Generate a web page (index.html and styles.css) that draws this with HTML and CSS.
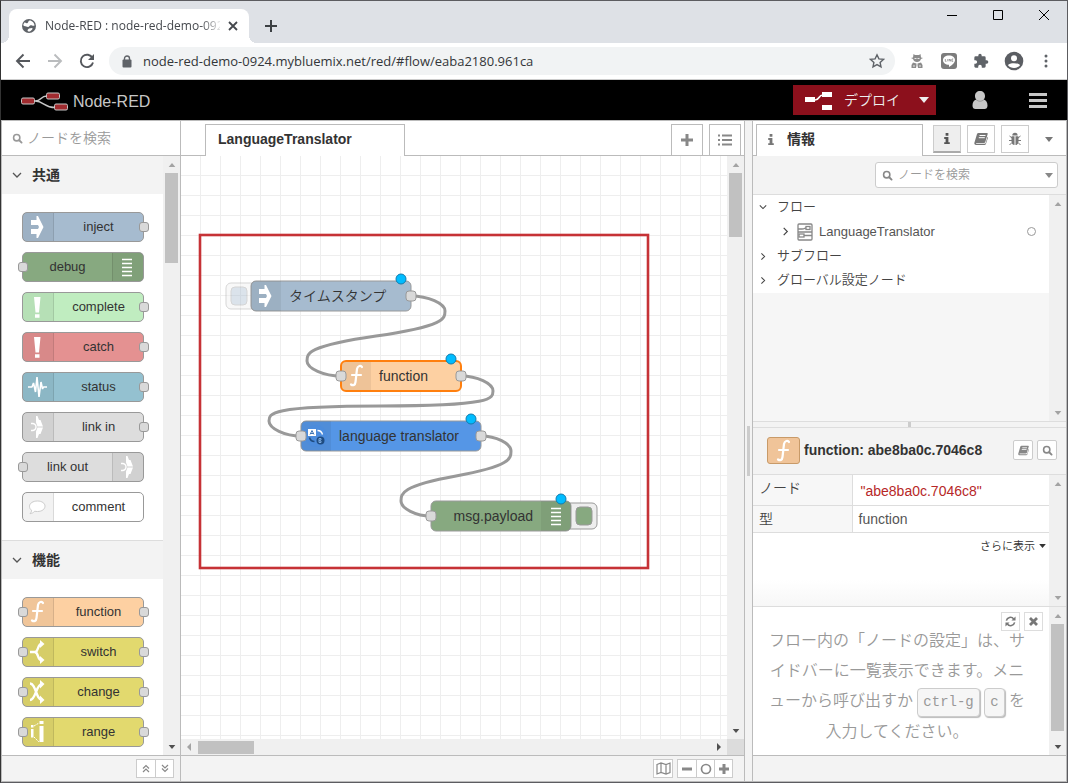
FILE: index.html
```
<!DOCTYPE html>
<html lang="ja">
<head>
<meta charset="utf-8">
<title>Node-RED : node-red-demo-0924</title>
<link rel="stylesheet" href="styles.css">
</head>
<body>
<svg class="defs" aria-hidden="true">
  <symbol id="i-inject" viewBox="0 0 30 30"><path fill="#fff" d="M9 8h5.500V4H16l5.500 11L16 26h-1.500v-4H9v-5h7l1-2-1-2H9z"/></symbol>
  <symbol id="i-debug" viewBox="0 0 30 30"><path stroke="#fff" stroke-width="1.400" d="M10 7.500h10M10 11.500h10M10 15.500h10M10 19.500h10M10 23.500h10"/></symbol>
  <symbol id="i-alert" viewBox="0 0 30 30"><path fill="#fff" d="M12 5h6.500l-1.500 15.500h-3.500zM13 22.300h4.500v3.500H13z"/></symbol>
  <symbol id="i-status" viewBox="0 0 30 30"><path fill="none" stroke="#fff" stroke-width="1.600" stroke-linejoin="bevel" d="M6 15h4l1.500-4 2 9L15 5l2 20 2-15 1.500 7 1-2h3.500"/></symbol>
  <symbol id="i-link" viewBox="0 0 30 30"><path fill="#fff" d="M14 4h1.500l1.500 4h1.500l2.500 6.500h-5.500L14 10.500zM14 26h1.500l1.500-4h1.500l2.500-6.500h-5.500L14 19.500z"/><path fill="none" stroke="#fff" stroke-width="1.400" d="M9 11.500h1.500a3.500 3.500 0 0 1 0 7H9"/></symbol>
  <symbol id="i-comment" viewBox="0 0 30 30"><path fill="#fff" stroke="#ccc" d="M15.500 9c4.500 0 7.500 2.300 7.500 5.200s-3 5.300-7.500 5.300c-1 0-2-.1-2.800-.3-1.200 1.500-2.700 2.200-4.700 2.500 1-1 1.600-2 1.600-3.500C8 17.200 7.500 16 7.500 14.200 7.500 11.300 11 9 15.500 9z"/></symbol>
  <symbol id="i-function" viewBox="0 0 30 30"><path fill="none" stroke="#fff" stroke-width="2.200" stroke-linecap="round" d="M21 6c-1-2-4.500-1.500-5 2l-1.500 13c-.3 3-2.500 4-4.500 2.500M11 14h9"/></symbol>
  <symbol id="i-switch" viewBox="0 0 30 30"><path fill="none" stroke="#fff" stroke-width="2.400" d="M8 15h5.500c3-1 2-8 6.500-8.500M13 15c4 1 2 8 7 8.500"/><path fill="#fff" d="M18 3l4.500 4-4.500 4zM18 19l4.500 4-4.500 4z"/></symbol>
  <symbol id="i-change" viewBox="0 0 30 30"><path fill="none" stroke="#fff" stroke-width="2.300" d="M8 6.500c6 0 6 16.500 12 16.500M8 23c6 0 6-16 12-16"/><path fill="#fff" d="M18 3l4.500 4-4.500 4.500zM18 18.500l4.500 4.500-4.500 4z"/></symbol>
  <symbol id="i-range" viewBox="0 0 30 30"><path fill="#fff" d="M9 8h2.500v2.500H9zM9 12h2.500v8.500H9zM17.500 4h4v3h-4zM17.500 9h4v16h-4z"/><path stroke="#fff" stroke-dasharray="2 1" d="M12 9l5-3M12 20l5 5"/></symbol>
  <symbol id="i-book" viewBox="0 0 14 14"><path fill="currentColor" d="M4.500 1H13c.7 0 .9.500.7 1l-2.400 8c-.2.600-.7.900-1.300.9H2.400c-.6 0-.6.900 0 .9H11c.3 0 .5-.2.600-.5l2-6.500c.5.300.5.800.3 1.300l-2 6c-.2.600-.8.900-1.400.9H2C.8 13 0 11.800.4 10.800L3 2c.2-.6.800-1 1.500-1z"/><path stroke="#fff" d="M5.500 3.500h6M4.800 5.700h6"/></symbol>
  <symbol id="i-search" viewBox="0 0 14 14"><circle cx="6" cy="6" r="4" fill="none" stroke="currentColor" stroke-width="2"/><path stroke="currentColor" stroke-width="2.400" stroke-linecap="round" d="M9.200 9.200l3 3"/></symbol>
  <symbol id="i-info" viewBox="0 0 8 14"><path fill="currentColor" d="M2.500 1h3v3h-3zM1 5.500h4.500V11H7v2H1v-2h1.500V7.500H1z"/></symbol>
  <symbol id="i-right" viewBox="0 0 10 10"><path fill="none" stroke="currentColor" stroke-width="1.300" d="M3 1L7 5 3 9"/></symbol>
  <symbol id="i-down" viewBox="0 0 10 10"><path fill="none" stroke="currentColor" stroke-width="1.300" d="M1 3l4 4 4-4"/></symbol>
  <symbol id="i-caret" viewBox="0 0 10 6"><path fill="currentColor" d="M0 0h10L5 6z"/></symbol>
  <symbol id="i-caretup" viewBox="0 0 10 6"><path fill="currentColor" d="M0 6h10L5 0z"/></symbol>
</svg>

<div class="window">
  <div class="tabstrip">
    <div class="tab">
      <svg width="16" height="16" viewBox="0 0 16 16"><circle cx="8" cy="8" r="7" fill="#5f6368"/><path fill="#fff" d="M8.500 2.500c2.500 0 5 2.500 5 5-1.500 1-2.500-.5-4-.3C8 7.500 8.500 9 7 9 5.500 9 5 8 3 8L2.200 7c.3-1 .8-2 1.600-2.800C5 5 5.500 5.500 6.500 5c1-.6.500-1.800 2-2.500zM8 10.500l3-.5c.8.300.5 1.200 0 1.700-.8.800-2 2-3.500 1.800-.7-.3-1.200-1-.8-1.800z"/></svg>
      <span class="tab-title">Node-RED : node-red-demo-0924</span>
      <button class="plain" aria-label="Close tab"><svg width="10" height="10" viewBox="0 0 10 10"><path stroke="#45484d" stroke-width="1.800" d="M1 1l8 8M9 1L1 9"/></svg></button>
    </div>
    <button class="plain newtab" aria-label="New tab"><svg width="12" height="12" viewBox="0 0 12 12"><path stroke="#3c4043" stroke-width="2" d="M6 0v12M0 6h12"/></svg></button>
    <div class="wincontrols">
      <button class="plain" aria-label="Minimize"><svg width="12" height="12" viewBox="0 0 12 12"><path stroke="#000" d="M1 6.500h10"/></svg></button>
      <button class="plain" aria-label="Maximize"><svg width="12" height="12" viewBox="0 0 12 12"><path fill="none" stroke="#000" d="M1.500 1.500h9v9h-9z"/></svg></button>
      <button class="plain" aria-label="Close"><svg width="12" height="12" viewBox="0 0 12 12"><path stroke="#000" d="M1 1l10 10M11 1L1 11"/></svg></button>
    </div>
  </div>

  <div class="toolbar">
    <div class="nav">
      <button class="plain" aria-label="Back"><svg width="16" height="16" viewBox="0 0 16 16"><path fill="none" stroke="#55585d" stroke-width="1.900" d="M15 8H2M8.500 1.500L2 8l6.500 6.500"/></svg></button>
      <button class="plain" aria-label="Forward"><svg width="16" height="16" viewBox="0 0 16 16"><path fill="none" stroke="#babcbe" stroke-width="1.900" d="M1 8h13M7.500 1.500L14 8l-6.500 6.500"/></svg></button>
      <button class="plain" aria-label="Reload"><svg width="16" height="16" viewBox="0 0 16 16"><path fill="none" stroke="#55585d" stroke-width="1.900" d="M13.500 5A6.200 6.200 0 1 0 14 9.500"/><path fill="#55585d" d="M15 1v6H9z"/></svg></button>
    </div>
    <div class="address">
      <svg width="10" height="13" viewBox="0 0 10 13"><path fill="none" stroke="#5f6368" stroke-width="1.400" d="M2.500 5V3.500a2.500 2.500 0 0 1 5 0V5"/><rect y="4.500" x=".5" width="9" height="8" rx="1" fill="#5f6368"/></svg>
      <input class="url" aria-label="Address" value="node-red-demo-0924.mybluemix.net/red/#flow/eaba2180.961ca">
      <button class="plain" aria-label="Bookmark"><svg width="16" height="16" viewBox="0 0 16 16"><path fill="none" stroke="#5f6368" stroke-width="1.400" d="M8 1.800l1.900 4.100 4.500.5-3.300 3 .9 4.400L8 11.600l-4 2.200.9-4.400-3.300-3 4.500-.5z"/></svg></button>
    </div>
    <div class="extensions">
      <button class="plain" aria-label="Extension"><svg width="16" height="16" viewBox="0 0 16 16"><path fill="#8b8b8b" d="M4.500 1L6 2h4l1.500-1 .5 3.500 2 .5-2 1C11.500 8 10 9 8 9S4.500 8 4 6L2 5l2-.5zM2.500 15v-3L4 9.500l3.500 1v2L7 15zM13.500 15v-3L12 9.500l-3.500 1v2L9 15z"/><path stroke="#fff" stroke-width=".8" d="M5.500 5.500h2M8.500 5.500h2M4 13h2M10 13h2"/></svg></button>
      <button class="plain" aria-label="LINE"><svg width="18" height="18" viewBox="0 0 18 18"><rect x="1" y="1" width="16" height="16" rx="3" fill="#7c7c7c"/><path fill="#fff" d="M9 3.500c3.500 0 6 2 6 4.700 0 2-2 4.300-6 6.800v-2.200c-3.500 0-6-2-6-4.600s2.500-4.700 6-4.700z"/><path fill="none" stroke="#888" stroke-width=".8" d="M5.300 7v2.300h1.200M7.800 7v2.300M9.200 9.300V7l1.600 2.300V7M13.200 7h-1.200v2.300h1.200"/></svg></button>
      <button class="plain" aria-label="Extensions"><svg width="16" height="16" viewBox="0 0 24 24"><path fill="#5f6368" d="M20.500 11H19V7a2 2 0 0 0-2-2h-4V3.500a2.500 2.500 0 0 0-5 0V5H4a2 2 0 0 0-2 2v3.800h1.500a2.700 2.700 0 0 1 0 5.400H2V20c0 1.100.9 2 2 2h3.800v-1.500a2.700 2.700 0 0 1 5.400 0V22H17a2 2 0 0 0 2-2v-4h1.500a2.500 2.500 0 0 0 0-5z"/></svg></button>
      <button class="plain" aria-label="Profile"><svg width="20" height="20" viewBox="0 0 20 20"><circle cx="10" cy="10" r="9.300" fill="#5b5e63"/><circle cx="10" cy="7.300" r="3" fill="#fff"/><path fill="#fff" d="M4 14.200c1-2.600 11-2.600 12 0-2.600 3.600-9.400 3.600-12 0z"/></svg></button>
      <button class="plain menu-dots" aria-label="Menu"><svg width="4" height="14" viewBox="0 0 4 14"><g fill="#5f6368"><circle cx="2" cy="2" r="1.500"/><circle cx="2" cy="7" r="1.500"/><circle cx="2" cy="12" r="1.500"/></g></svg></button>
    </div>
  </div>

  <header class="header">
    <svg width="50" height="20" viewBox="0 0 50 20"><path fill="none" stroke="#c7c7c7" stroke-width="1.500" d="M15 10c7 0 5-5 12-5M15 10c9 0 9 6.500 20 6.500"/><g fill="#a02b2f" stroke="#c7c7c7"><rect x="1.500" y="7" width="13" height="6" rx="1.500"/><rect x="26.500" y="2" width="13" height="6" rx="1.500"/><rect x="34.500" y="13" width="13" height="6" rx="1.500"/></g></svg>
    <span class="brand">Node-RED</span>
    <button class="deploy">
      <svg width="28" height="20" viewBox="0 0 28 20"><path fill="#fff" d="M0 7h10v5H0zM17 2h10v5H17zM17 15h10v5H17z"/><path fill="none" stroke="#fff" stroke-width="1.600" d="M10 10c5 0 3-5 8-5"/></svg>
      <span>デプロイ</span>
      <svg width="10" height="6"><use href="#i-caret"/></svg>
    </button>
    <button class="plain user" aria-label="User"><svg width="16" height="18" viewBox="0 0 16 18"><path fill="#c7c7c7" d="M.5 14.500C.5 11 2 9 4.200 8.500 3.500 7.600 3 6.500 3 5c0-3 2-5 5-5s5 2 5 5c0 1.500-.5 2.600-1.200 3.500C14 9 15.500 11 15.500 14.500c0 2.500-1.200 3.500-3 3.500h-9c-1.800 0-3-1-3-3.500z"/><path fill="none" stroke="#888" stroke-width=".7" d="M4 8.500c2.500 2.300 5.500 2.300 8 0"/></svg></button>
    <button class="plain" aria-label="Main menu"><svg width="18" height="15" viewBox="0 0 18 15"><path stroke="#c7c7c7" stroke-width="2.800" d="M0 1.500h18M0 7.500h18M0 13.500h18"/></svg></button>
  </header>

  <main class="editor">
    <section class="palette">
      <label class="palette-search"><svg width="11" height="11"><use href="#i-search"/></svg><input type="search" placeholder="ノードを検索" aria-label="ノードを検索"></label>
      <div class="scroller">
        <div class="scroll-content">
          <button class="category"><svg width="10" height="10"><use href="#i-down"/></svg>共通</button>
          <ul class="nodes">
            <li class="node out c-inject"><span class="icon"><svg><use href="#i-inject"/></svg></span><span class="label">inject</span></li>
            <li class="node in flip c-debug"><span class="icon"><svg><use href="#i-debug"/></svg></span><span class="label">debug</span></li>
            <li class="node out c-complete"><span class="icon"><svg><use href="#i-alert"/></svg></span><span class="label">complete</span></li>
            <li class="node out c-catch"><span class="icon"><svg><use href="#i-alert"/></svg></span><span class="label">catch</span></li>
            <li class="node out c-status"><span class="icon"><svg><use href="#i-status"/></svg></span><span class="label">status</span></li>
            <li class="node out c-link"><span class="icon"><svg><use href="#i-link"/></svg></span><span class="label">link in</span></li>
            <li class="node in flip c-link"><span class="icon"><svg><use href="#i-link"/></svg></span><span class="label">link out</span></li>
            <li class="node c-comment"><span class="icon"><svg><use href="#i-comment"/></svg></span><span class="label">comment</span></li>
          </ul>
          <button class="category next"><svg width="10" height="10"><use href="#i-down"/></svg>機能</button>
          <ul class="nodes">
            <li class="node in out c-function"><span class="icon"><svg><use href="#i-function"/></svg></span><span class="label">function</span></li>
            <li class="node in out c-logic"><span class="icon"><svg><use href="#i-switch"/></svg></span><span class="label">switch</span></li>
            <li class="node in out c-logic"><span class="icon"><svg><use href="#i-change"/></svg></span><span class="label">change</span></li>
            <li class="node in out c-logic"><span class="icon"><svg><use href="#i-range"/></svg></span><span class="label">range</span></li>
          </ul>
        </div>
        <div class="bar" aria-hidden="true"><svg class="arrow" width="8" height="4"><use href="#i-caretup"/></svg><i class="thumb t-palette"></i><svg class="arrow end on" width="8" height="4"><use href="#i-caret"/></svg></div>
      </div>
      <div class="footer">
        <div class="group"><button aria-label="Collapse all"><svg width="8" height="9" viewBox="0 0 8 9"><path fill="none" stroke="#888" stroke-width="1.200" d="M1 4.500l3-3 3 3M1 8l3-3 3 3"/></svg></button><button aria-label="Expand all"><svg width="8" height="9" viewBox="0 0 8 9"><path fill="none" stroke="#888" stroke-width="1.200" d="M1 1l3 3 3-3M1 4.500l3 3 3-3"/></svg></button></div>
      </div>
    </section>

    <section class="workspace">
      <div class="ws-tabs">
        <button class="ws-tab">LanguageTranslator</button>
        <span class="fill"></span>
        <button class="ws-btn" aria-label="Add flow"><svg width="12" height="12" viewBox="0 0 12 12"><path stroke="#888" stroke-width="3" d="M6 0v12M0 6h12"/></svg></button>
        <button class="ws-btn" aria-label="List flows"><svg width="16" height="12" viewBox="0 0 16 12"><path stroke="#888" stroke-width="2" d="M1 1.500h2M1 6h2M1 10.500h2M5 1.500h10M5 6h10M5 10.500h10"/></svg></button>
      </div>
      <div class="ws-body">
        <svg class="canvas">
          <defs><pattern id="grid" width="20" height="20" patternUnits="userSpaceOnUse" x="200" y="175"><path fill="#eee" d="M0 0h20v1H1v19H0z"/></pattern></defs>
          <g transform="translate(-181 -156)">
            <rect x="181" y="156" width="3000" height="3000" fill="url(#grid)"/>
            <rect x="200" y="235" width="448" height="333" fill="none" stroke="#c63236" stroke-width="2.600"/>
            <g class="wires">
              <path d="M411 296C428 296 445 303.500 445 311S445 326 376 336 307 353.500 307 361 324 376 341 376"/>
              <path d="M461 376C477 376 493 383.500 493 391S493 406 381 406 269 413.500 269 421 285 436 301 436"/>
              <path d="M481 436C496 436 511 443.500 511 451S511 466 456 476 401 493.500 401 501 416 516 431 516"/>
            </g>
            <g opacity=".4"><rect class="outline" x="226" y="283" width="32" height="26" rx="5" fill="#eee"/><rect class="outline" x="231" y="287" width="16" height="18" rx="4" fill="#a6bbcf"/></g>
            <rect class="outline" x="251" y="281" width="160" height="30" rx="5" fill="#a6bbcf"/>
            <path class="shade" d="M256 281h25v30h-25q-5 0-5-5v-20q0-5 5-5z"/>
            <use href="#i-inject" x="250" y="281" width="30" height="30"/>
            <text x="289" y="301">タイムスタンプ</text>
            <rect class="port" x="406" y="291" width="10" height="10" rx="3"/>
            <circle class="changed" cx="401" cy="279" r="5"/>

            <rect x="341" y="361" width="120" height="30" rx="5" fill="#fdd0a2" stroke="#ff7f0e" stroke-width="2"/>
            <path class="shade" d="M346 362h25v28h-25q-4 0-4-4v-20q0-4 4-4z"/>
            <use href="#i-function" x="341" y="361" width="30" height="30"/>
            <text x="379" y="381">function</text>
            <rect class="port" x="336" y="371" width="10" height="10" rx="3"/>
            <rect class="port" x="456" y="371" width="10" height="10" rx="3"/>
            <circle class="changed" cx="451" cy="359" r="5"/>

            <rect class="outline" x="301" y="421" width="180" height="30" rx="5" fill="#5596e6"/>
            <path class="shade" d="M306 421h25v30h-25q-5 0-5-5v-20q0-5 5-5z"/>
            <circle cx="316" cy="436" r="11" fill="#4c8cdc"/>
            <rect x="308" y="429" width="8" height="7" fill="#fff"/><path fill="none" stroke="#4176b5" d="M310 434.500l2-4 2 4M311 433.500h2"/>
            <circle cx="320.500" cy="440.500" r="4" fill="#1f4c80"/><path fill="none" stroke="#7ba9df" d="M319 438.500v4h2q1-2-2-2 3 0 2-2z"/>
            <path fill="none" stroke="#fff" stroke-width="1.300" d="M317.500 430.500q4 0 5 4"/><path fill="none" stroke="#1f4c80" stroke-width="1.500" d="M314.500 441.500q-4 0-5-4"/>
            <text x="339" y="441">language translator</text>
            <rect class="port" x="296" y="431" width="10" height="10" rx="3"/>
            <rect class="port" x="476" y="431" width="10" height="10" rx="3"/>
            <circle class="changed" cx="471" cy="419" r="5"/>

            <rect class="outline" x="565" y="503" width="32" height="26" rx="5" fill="#eee"/><rect class="outline" x="576" y="507" width="16" height="18" rx="4" fill="#87a980"/>
            <rect class="outline" x="431" y="501" width="140" height="30" rx="5" fill="#87a980"/>
            <path class="shade" d="M541 501h25q5 0 5 5v20q0 5-5 5h-25z"/>
            <use href="#i-debug" x="541" y="501" width="30" height="30"/>
            <text x="533" y="521" text-anchor="end">msg.payload</text>
            <rect class="port" x="426" y="511" width="10" height="10" rx="3"/>
            <circle class="changed" cx="561" cy="499" r="5"/>
          </g>
        </svg>
        <div class="bar" aria-hidden="true"><svg class="arrow" width="8" height="4"><use href="#i-caretup"/></svg><i class="thumb t-canvas"></i><svg class="arrow end on" width="8" height="4"><use href="#i-caret"/></svg></div>
        <div class="hbar" aria-hidden="true"><svg width="4" height="8" viewBox="0 0 4 8"><path fill="#a3a3a3" d="M4 0v8L0 4z"/></svg><i class="hthumb"></i><svg class="end" width="4" height="8" viewBox="0 0 4 8"><path fill="#505050" d="M0 0v8l4-4z"/></svg></div>
        <div class="corner"></div>
      </div>
      <div class="footer ws-footer">
        <div class="group"><button aria-label="Navigator"><svg width="15" height="13" viewBox="0 0 15 13"><path fill="none" stroke="#888" stroke-width="1.200" d="M1 2.500l4-1.500 5 1.500L14 1v9.500L10 12l-5-1.500L1 12zM5 1v9.500M10 2.500V12"/></svg></button></div>
        <div class="group"><button aria-label="Zoom out"><svg width="10" height="10" viewBox="0 0 10 10"><path stroke="#888" stroke-width="3" d="M0 5h10"/></svg></button><button aria-label="Reset zoom"><svg width="12" height="12" viewBox="0 0 12 12"><circle cx="6" cy="6" r="4.500" fill="none" stroke="#888" stroke-width="1.700"/></svg></button><button aria-label="Zoom in"><svg width="10" height="10" viewBox="0 0 10 10"><path stroke="#888" stroke-width="3" d="M5 0v10M0 5h10"/></svg></button></div>
      </div>
    </section>

    <div class="separator"><i></i></div>

    <aside class="sidebar">
      <div class="side-tabs">
        <button class="side-tab"><svg width="8" height="13"><use href="#i-info"/></svg>情報</button>
        <div class="side-btns">
          <button class="active" aria-label="情報"><svg width="8" height="13"><use href="#i-info"/></svg></button>
          <button aria-label="ヘルプ"><svg width="14" height="14"><use href="#i-book"/></svg></button>
          <button aria-label="デバッグ"><svg width="14" height="14" viewBox="0 0 14 14"><path fill="#777" d="M4.300 3.500a2.700 2.700 0 0 1 5.400 0zM3.500 4.300h3V13C4.600 13 3.500 11.500 3.500 9zM7.500 4.300h3V9c0 2.500-1.100 4-3 4z"/><path fill="none" stroke="#777" d="M1.500 4l2.500 2M12.500 4L10 6M1 8.500h3M10 8.500h3M1.500 13L4 10.500M12.500 13L10 10.500"/></svg></button>
          <button class="plain more" aria-label="More"><svg width="8" height="5"><use href="#i-caret"/></svg></button>
        </div>
      </div>
      <div class="side-filter">
        <label><svg width="11" height="11"><use href="#i-search"/></svg><input type="search" placeholder="ノードを検索" aria-label="ノードを検索"><svg width="8" height="5"><use href="#i-caret"/></svg></label>
      </div>
      <div class="scroller tree-panel">
        <div class="scroll-content">
          <ul class="tree">
            <li><svg width="8" height="8"><use href="#i-down"/></svg>フロー</li>
            <li class="child"><svg width="9" height="9"><use href="#i-right"/></svg><svg width="16" height="18" viewBox="0 0 16 18"><g fill="none" stroke="#888" stroke-width="1.300"><rect x="1" y="1" width="14" height="16" rx="1"/><path d="M1 6h4c3 0 2-1 4-1M1 9h14M7 12.500h8"/><rect x="9" y="3.500" width="4" height="3"/><rect x="2" y="11" width="5" height="3"/></g></svg><span>LanguageTranslator</span><i class="ring"></i></li>
            <li><svg width="8" height="9"><use href="#i-right"/></svg>サブフロー</li>
            <li><svg width="8" height="9"><use href="#i-right"/></svg>グローバル設定ノード</li>
          </ul>
        </div>
        <div class="bar" aria-hidden="true"><svg class="arrow" width="8" height="4"><use href="#i-caretup"/></svg><svg class="arrow end" width="8" height="4"><use href="#i-caret"/></svg></div>
      </div>
      <div class="splitter"><i></i></div>
      <div class="info-head">
        <span class="info-icon"><svg width="30" height="26" viewBox="0 2 30 26"><use href="#i-function" width="30" height="30"/></svg></span>
        <strong>function: abe8ba0c.7046c8</strong>
        <button class="small" aria-label="Help"><svg width="11" height="11"><use href="#i-book"/></svg></button>
        <button class="small" aria-label="Find"><svg width="11" height="11"><use href="#i-search"/></svg></button>
      </div>
      <div class="scroller info-body">
        <div class="scroll-content">
          <table>
            <tr><th scope="row">ノード</th><td class="id">"abe8ba0c.7046c8"</td></tr>
            <tr><th scope="row">型</th><td>function</td></tr>
          </table>
          <a class="show-more" href="#">さらに表示 <svg width="7" height="4"><use href="#i-caret"/></svg></a>
        </div>
        <div class="bar" aria-hidden="true"><svg class="arrow" width="8" height="4"><use href="#i-caretup"/></svg><svg class="arrow end" width="8" height="4"><use href="#i-caret"/></svg></div>
      </div>
      <div class="scroller tips">
        <div class="scroll-content">
          <p>フロー内の「ノードの設定」は、サイドバーに一覧表示できます。メニューから呼び出すか <kbd>ctrl-g</kbd> <kbd>c</kbd> を入力してください。</p>
          <div class="tip-btns">
            <button aria-label="Refresh"><svg width="11" height="11" viewBox="0 0 12 12"><path fill="none" stroke="#777" stroke-width="1.700" d="M1.500 5a4.500 4.500 0 0 1 8-1.800M10.500 7a4.500 4.500 0 0 1-8 1.800"/><path fill="#777" d="M11.500.5v4.500H7zM.5 11.500V7H5z"/></svg></button>
            <button aria-label="Close tips"><svg width="9" height="9" viewBox="0 0 9 9"><path stroke="#777" stroke-width="2.800" d="M1 1l7 7M8 1L1 8"/></svg></button>
          </div>
        </div>
        <div class="bar" aria-hidden="true"><svg class="arrow" width="8" height="4"><use href="#i-caretup"/></svg><i class="thumb t-tips"></i><svg class="arrow end on" width="8" height="4"><use href="#i-caret"/></svg></div>
      </div>
      <div class="footer"></div>
    </aside>
  </main>
</div>
</body>
</html>
```

FILE: styles.css
```
*, ::before, ::after { box-sizing: border-box; }
:root { --line: #bbb; --soft: #ddd; --panel: #f3f3f3; }
body { margin: 0; font: 350 14px/20px "Liberation Sans", "Noto Sans CJK JP", sans-serif; color: #444; }
svg { display: block; flex: none; }
ul { list-style: none; margin: 0; padding: 0; }
button { font: inherit; color: inherit; padding: 0; border: 0; background: none; display: flex; align-items: center; justify-content: center; flex: none; }
input { font: inherit; color: inherit; border: 0; padding: 0; background: none; min-width: 0; flex: 1; }
input::placeholder { color: #999; opacity: 1; }
.defs { position: absolute; width: 0; height: 0; }

.window { height: 100vh; min-height: 600px; display: flex; flex-direction: column; border: 1px solid #5c5c60; border-left-color: #333; overflow: hidden; }

/* Browser chrome */
.tabstrip { flex: none; height: 42px; display: flex; align-items: flex-end; background: #dee1e6; }
.tab { position: relative; width: 240px; height: 34px; margin-left: 8px; padding: 0 11px 0 12px; display: flex; align-items: center; gap: 8px; background: #fff; border-radius: 8px 8px 0 0; }
.tab::before, .tab::after { content: ""; position: absolute; bottom: 0; width: 8px; height: 8px; }
.tab::before { right: 100%; background: radial-gradient(circle at 0 0, transparent 8px, #fff 8px); }
.tab::after { left: 100%; background: radial-gradient(circle at 100% 0, transparent 8px, #fff 8px); }
.tab-title { flex: 1; overflow: hidden; white-space: nowrap; font: 12px/20px "Open Sans", sans-serif; color: #45484d; mask-image: linear-gradient(to right, #000 156px, transparent 178px); }
.newtab { height: 34px; margin-left: 16px; }
.wincontrols { align-self: flex-start; margin-left: auto; padding-right: 17px; height: 28px; display: flex; gap: 34px; }
.toolbar { flex: none; height: 37px; display: flex; align-items: center; background: #fff; border-bottom: 1px solid #ccc; }
.nav { display: flex; gap: 16px; padding: 0 14px; }
.address { flex: 1; height: 28px; display: flex; align-items: center; gap: 11px; padding: 0 10px 0 13px; background: #f1f3f4; border-radius: 14px; }
.url { font: 13px/20px "Open Sans", sans-serif; color: #333639; }
.extensions { display: flex; align-items: center; gap: 15px; padding: 0 19px 0 14px; }
.menu-dots { margin-left: 5px; }

/* Application header */
.header { flex: none; height: 40px; display: flex; align-items: center; background: #000; padding: 0 20px 0 19px; }
.brand { flex: 1; margin-left: 3px; padding-top: 3px; font-size: 16px; color: #c7c7c7; line-height: 24px; }
.header > svg { margin-top: 2px; }
.deploy { height: 30px; width: 143px; padding-left: 12px; justify-content: flex-start; background: #8c101c; color: #eee; gap: 11px; }
.deploy svg:last-child { margin-left: 8px; }
.user { margin: 0 41px 0 36px; }

.editor { flex: 1; min-height: 0; display: grid; grid-template-columns: 180px 1fr 7px 315px; border-top: 1px solid var(--line); }
.palette, .workspace, .sidebar { display: flex; flex-direction: column; min-width: 0; min-height: 0; border-right: 1px solid var(--line); border-bottom: 1px solid var(--line); background: #fff; }
.palette, .sidebar { border-left: 1px solid var(--line); }
.scroller { display: flex; flex: 1; min-height: 0; }
.scroll-content { flex: 1; min-width: 0; overflow: hidden; position: relative; }
.bar { width: 17px; display: flex; flex-direction: column; align-items: center; background: #f0f0f0; padding: 7px 0 6px; color: #a3a3a3; }
.end { margin-top: auto; }
.on { color: #505050; }
.thumb { width: 13px; margin-top: 6px; background: #c1c1c1; }
.t-palette { height: 90px; }
.t-canvas { height: 64px; }
.t-tips { height: 107px; }
.footer { flex: none; height: 26px; display: flex; align-items: center; justify-content: flex-end; background: var(--panel); border-top: 1px solid var(--line); padding: 0 6px; gap: 4px; }
.group { display: flex; height: 19px; border: 1px solid #ccc; background: #fff; }
.group button { width: 18px; }
.group button + button { border-left: 1px solid #ccc; }

/* Palette */
.palette-search { flex: none; height: 35px; display: flex; align-items: center; gap: 4px; padding: 0 10px; border-bottom: 1px solid var(--line); color: #999; }
.category { width: 100%; height: 38px; justify-content: flex-start; gap: 10px; padding-left: 10px; background: var(--panel); font-weight: bold; color: #333; }
.category svg { color: #555; }
.next { height: 39px; border-top: 1px solid var(--soft); }
.nodes { padding: 18px 19px 18px 20px; display: grid; gap: 10px; }
.node { position: relative; display: flex; height: 30px; border: 1px solid #999; border-radius: 5px; font-size: 13px; color: #333; }
.icon { width: 31px; background: rgba(0, 0, 0, .05); border-right: 1px solid rgba(0, 0, 0, .1); }
.icon svg { width: 30px; height: 30px; margin: -1px 0 0 -1px; }
.label { flex: 1; text-align: center; line-height: 28px; }
.flip { flex-direction: row-reverse; }
.flip .icon { border-right: 0; border-left: 1px solid rgba(0, 0, 0, .1); }
.in::before, .out::after { content: ""; position: absolute; top: 9px; width: 10px; height: 10px; border: 1px solid #999; border-radius: 3px; background: #d9d9d9; }
.in::before { left: -5px; }
.out::after { right: -6px; }
.c-inject { background: #a6bbcf; }
.c-debug { background: #87a980; }
.c-complete { background: #c0edc0; }
.c-catch { background: #e49191; }
.c-status { background: #94c1d0; }
.c-link { background: #ddd; }
.c-comment { background: #fff; }
.c-function { background: #fdd0a2; }
.c-logic { background: #e2d96e; }

/* Workspace */
.ws-tabs { flex: none; height: 35px; display: flex; align-items: flex-end; background: linear-gradient(var(--line), var(--line)) bottom / 100% 1px no-repeat; padding: 0 3px 0 24px; }
.ws-tab { width: 200px; height: 32px; justify-content: flex-start; padding: 0 0 3px 12px; background: #fff; border: 1px solid var(--line); border-bottom: 0; font-weight: bold; color: #333; }
.fill { flex: 1; }
.ws-btn { width: 32px; height: 32px; border: 1px solid var(--line); margin-left: 6px; }
.ws-body { flex: 1; min-height: 0; display: grid; grid-template: 1fr 16px / 1fr 17px; }
.canvas { width: 100%; height: 100%; min-height: 0; font-size: 14px; }
.canvas text { fill: #333; }
.wires { fill: none; stroke: #999; stroke-width: 3; }
.outline { stroke: #999; }
.shade { fill: rgba(0, 0, 0, .06); }
.port { fill: #d9d9d9; stroke: #999; }
.changed { fill: #00bcff; stroke: #117cae; }
.hbar { display: flex; align-items: center; background: #f0f0f0; padding: 0 6px; }
.hthumb { width: 56px; height: 13px; margin-left: 7px; background: #c1c1c1; }
.hbar .end { margin: 0 0 0 auto; }
.corner { background: #dcdcdc; }
.ws-footer { padding-right: 11px; }

.separator { background: var(--panel); display: flex; align-items: center; justify-content: center; border-bottom: 1px solid var(--line); }
.separator i { width: 3px; height: 50px; background: #ccc; }

/* Sidebar */
.side-tabs { flex: none; height: 35px; display: flex; align-items: flex-end; padding-left: 3px; background: linear-gradient(var(--line), var(--line)) bottom / 100% 1px no-repeat; }
.side-tab { width: 167px; height: 32px; background: #fff; border: 1px solid var(--line); border-bottom: 0; justify-content: flex-start; padding: 0 0 3px 10px; gap: 12px; font-weight: bold; color: #333; }
.side-tab svg, .side-btns { color: #777; }
.side-btns { display: flex; gap: 6px; margin-left: 10px; padding-bottom: 3px; }
.side-btns button { width: 28px; height: 28px; border: 1px solid #ccc; }
.side-btns .active { background: #eee; border-bottom: 2px solid #aaa; color: #555; }
.side-btns .more { border: 0; }
.side-filter { flex: none; height: 39px; display: flex; justify-content: flex-end; padding: 6px 8px; background: var(--panel); border-bottom: 1px solid var(--soft); }
.side-filter label { width: 183px; height: 26px; display: flex; align-items: center; gap: 5px; padding: 0 4px 0 6px; border: 1px solid #ccc; border-radius: 3px; background: #fff; color: #888; font-size: 12px; }
.tree-panel .scroll-content { background: #f6f6f6; }
.tree { background: #fff; padding-bottom: 1px; color: #444; }
.tree li { height: 24px; display: flex; align-items: center; gap: 10px; padding-left: 6px; font-size: 13px; }
.tree .child { height: 25px; padding-left: 28px; gap: 7px; }
.tree .child span { margin-left: -1px; color: #555; }
.ring { width: 9px; height: 9px; border: 1px solid #999; border-radius: 50%; margin: 0 13px 0 auto; }
.splitter { flex: none; height: 7px; border: solid var(--soft); border-width: 1px 0; background: var(--panel); display: flex; justify-content: center; }
.splitter i { width: 3px; background: #ccc; }
.info-head { flex: none; height: 47px; display: flex; align-items: center; gap: 4px; padding: 0 9px 2px 14px; background: var(--panel); border-bottom: 1px solid var(--soft); }
.info-head strong { flex: 1; font-weight: bold; color: #333; }
.info-icon { background: #f0c499; border: 1px solid #c89a68; border-radius: 3px; width: 33px; height: 27px; }
.small { width: 20px; height: 20px; border: 1px solid #ccc; border-radius: 2px; background: #fff; color: #888; }
.info-body { flex: none; height: 131px; }
.info-body .scroll-content { background: linear-gradient(#fff 80%, #f7f7f7); }
table { width: 100%; border-collapse: collapse; background: #fff; }
th { width: 99px; text-align: left; font-weight: inherit; vertical-align: top; background: #f7f7f7; border-right: 1px solid var(--soft); padding: 3px 6px; }
td { padding: 3px 6px; color: #555; }
th, td { border-bottom: 1px solid var(--soft); line-height: 20px; }
.id { color: #b72828; padding: 6px 8px 4px; }
.show-more { display: flex; justify-content: flex-end; align-items: center; gap: 4px; margin: 3px 3px 0 0; font-size: 11px; color: #333; text-decoration: none; }
.tips { flex: none; height: 149px; border-top: 1px solid var(--soft); }
.tips p { margin: 0; padding: 19px 21px 0 13px; text-align: center; font-size: 16px; line-height: 30px; color: #999; }
kbd { font: 14px/20px "Liberation Mono", monospace; display: inline-block; padding: 3px 5px 4px; border: 1px solid #ccc; border-radius: 4px; background: #f6f6f6; box-shadow: 1px 1px 1px #bbb; }
.tip-btns { position: absolute; top: 5px; right: 6px; display: flex; gap: 4px; }
.tip-btns button { width: 19px; height: 19px; border: 1px solid var(--soft); background: #fff; }
```
